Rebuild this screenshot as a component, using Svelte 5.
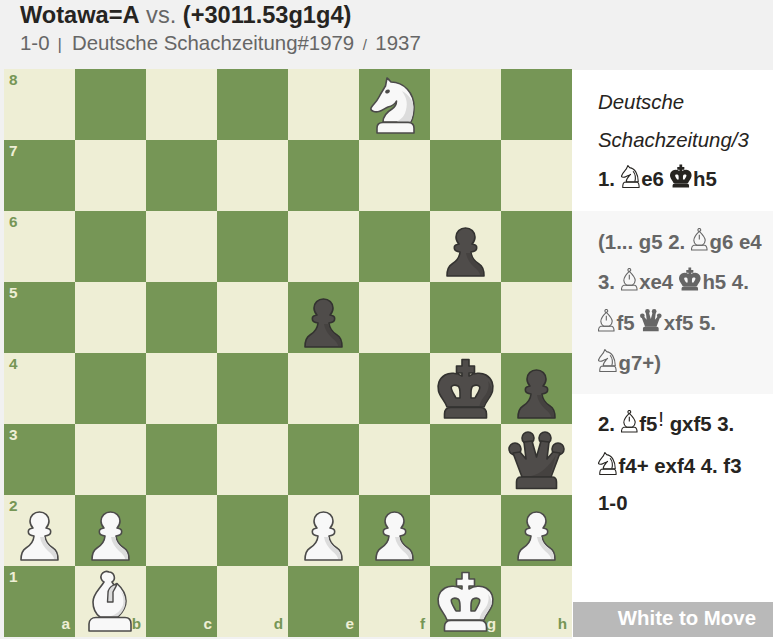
<script>
  const files = ['a', 'b', 'c', 'd', 'e', 'f', 'g', 'h'];
  const pieces = {
    f8: 'wn', g6: 'bp', e5: 'bp', g4: 'bk', h4: 'bp', h3: 'bq',
    a2: 'wp', b2: 'wp', e2: 'wp', f2: 'wp', h2: 'wp', b1: 'wb', g1: 'wk'
  };
  const squares = [];
  for (let r = 8; r >= 1; r--) {
    for (let f = 0; f < 8; f++) {
      const name = files[f] + r;
      squares.push({
        name,
        dark: (f + r) % 2 === 1,
        rank: f === 0 ? r : null,
        file: r === 1 ? files[f] : null,
        piece: pieces[name]
      });
    }
  }
  const kingBody = 'M32 6.500H39V13H44.500V20H39V23C44 20 51 19 56 22C62 25.500 64 32 62.500 38C61 44 56 48 54 54H17C15 48 10 44 8.500 38C7 32 9 25.500 15 22C20 19 27 20 32 23V20H26.500V13H32ZM21.500 33.500C23 32 26 32 28 33C29.500 34 30 36 30 40V45H26C24 41 20 36 21.500 33.500ZM49.500 33.500C48 32 45 32 43 33C41.500 34 41 36 41 40V45H45C47 41 51 36 49.500 33.500Z';
  const kingBase = 'M21 54.500H50C54 54.500 56.500 57 56.500 61V65H14.500V61C14.500 57 17 54.500 21 54.500Z';
  const queenBody = 'M21 53L12 29L19 28L25 35L23 18L31 17L35.500 33L40 17L48 18L46 35L52 28L59 29L50 53Z';
  const queenBase = 'M20 53H51C54 53 55.500 55 55.500 58V64.500H15.500V58C15.500 55 17 53 20 53Z';
  const queenBalls = [[14, 25], [27, 14], [44, 14], [57, 25]];
</script>

{#snippet piece(code)}
  <svg class="piece {code[0] === 'w' ? 'white' : 'black'}" viewBox="0 0 71 71">
    {#if code[1] === 'p'}
      <path class="body" d="M35.5 17C30 17 26 21 26 26C26 29 27.5 31.5 29 33L27 33.5C24.5 34 24 36 24.5 38C25 40 27 40.5 30 41C29.5 47 27 50 22 53C18.5 55 17 60 17 65L54 65C54 60 52.5 55 49 53C44 50 41.5 47 41 41C44 40.5 46 40 46.5 38C47 36 46.5 34 44 33.5L42 33C43.5 31.5 45 29 45 26C45 21 41 17 35.5 17Z" />
      <path class="shade" d="M36 42C37 48 40 52 44 56C48 59 50 62 50 64L53 64C53 60 52 56 48 53.500C44 50 41 47 40.500 42Z" />
    {:else if code[1] === 'k'}
      <path class="body" fill-rule="evenodd" d={kingBody} />
      <path class="shade" d="M58 28C60 34 57 41 53 45C51 48 50 50 49.500 53L53.500 53C55 48 60 44 61.500 38C62 35 60 30 58 28Z" />
      <path class="body" d={kingBase} />
    {:else if code[1] === 'q'}
      {#each queenBalls as b}
        <circle class="body" cx={b[0]} cy={b[1]} r="6" />
      {/each}
      <path class="body" d={queenBody} />
      <path class="shade" d="M55 31L49 52H30C40 50 48 42 55 31Z" />
      <path class="body" d={queenBase} />
    {:else if code[1] === 'b'}
      <path class="body" d="M34 6A5.500 5.500 0 0 1 37 16L39 19C40 19 41 18 42 17.500C47 22 51 29 51 35C51 43 46 48 43 51H25C21 48 18 43 18 36C18 28 24 24 29 16A5.500 5.500 0 0 1 34 6Z" />
      <path class="shade" d="M45 24C48 28 49 34 48 39C46 44 42 48 36 50H43C47 47 50.500 42 50.500 35C50.500 31 48 27 45 24Z" />
      <path class="cut" d="M32.500 36H38V26C39.500 23 41 21 42 18L38.500 19C35 21 33 24 33 27Z" />
      <path class="body" d="M21 51.500H50C54 51.500 56 54 56 58V65H14V58C14 54 17 51.500 21 51.500Z" />
    {:else if code[1] === 'n'}
      <path class="body" d="M28 9C30 10.500 31 12 32 13C45 13 55 24 55 38C55 44 54 49 52 53H24C24 47 28 43 33 40C36 38 37.500 36 37.500 32C35.500 36 33 37 29 38C26 39 24 41.500 20 42.500C16 43.500 11 42 12 39C14 35 17 34 20 28C22 24 24 21 26.500 17Z" />
      <path class="shade" d="M43 22C47 28 49 33 47 41C46 46 43 50 38 52.500H51.500C54 47 54.500 42 54.500 38C54.500 32 50 26 43 22Z" />
      <ellipse class="eye" cx="28.500" cy="22.500" rx="2.500" ry="1.800" transform="rotate(-25 28.500 22.500)" />
      <path class="body" d="M24 53.500H49C53 53.500 55 56 55 59V64H18V59C18 56 20 53.500 24 53.500Z" />
    {/if}
  </svg>
{/snippet}

{#snippet fig(kind)}
  {#if kind === 'N'}
    <svg class="fig line" width="19" height="23" viewBox="1 1 22 22" preserveAspectRatio="none" aria-label="knight">
      <path d="M9 1.500L11 3.500C17 4 21 10 21 17H7C7 14 10 12 12 10C10 11 8 11.500 7 12C5 13 2 13 1.500 12C2 9 5 7 7 5Z" />
      <path d="M15 7C18 10 18 14 17 17" />
      <path d="M5 17.500H20C21.500 18 22 20 22 22.500H3C3 20 3.500 18 5 17.500Z" />
    </svg>
  {:else if kind === 'B'}
    <svg class="fig line" width="17" height="23" viewBox="1 0 18 24" preserveAspectRatio="none" aria-label="bishop">
      <circle cx="9.800" cy="2" r="1.500" />
      <path d="M9.800 3.500C6 7 4 10 4 13C4 15.500 5.500 17 7 18H13C14.500 17 16 15.500 16 13C16 10 13.500 7 9.800 3.500Z" />
      <path d="M9.800 7V12" />
      <path d="M4 18H15.500C17.500 18.500 18 20 18 23H1.500C1.500 20 2 18.500 4 18Z" />
    </svg>
  {:else if kind === 'K'}
    <svg class="fig solid" width="22" height="24" viewBox="8 6 56 60" aria-label="king">
      <path d={kingBody} /><path d={kingBase} />
    </svg>
  {:else}
    <svg class="fig solid" width="22" height="23" viewBox="8 8 56 58" aria-label="queen">
      {#each queenBalls as b}<circle cx={b[0]} cy={b[1]} r="6" />{/each}
      <path d={queenBody} /><path d={queenBase} />
    </svg>
  {/if}
{/snippet}

<div class="page">
  <header class="head">
    <div class="title"><b>Wotawa=A</b> <span class="vs">vs.</span> <b>(+3011.53g1g4)</b></div>
    <div class="meta">1-0<span class="bar">|</span>Deutsche Schachzeitung#1979<span class="slash">/</span>1937</div>
  </header>
  <main class="main">
    <div class="board">
      {#each squares as s (s.name)}
        <div class="square" class:dark={s.dark}>
          {#if s.rank}<span class="rank">{s.rank}</span>{/if}
          {#if s.file}<span class="file">{s.file}</span>{/if}
          {#if s.piece}{@render piece(s.piece)}{/if}
        </div>
      {/each}
    </div>
    <aside class="side">
      <div class="moves">
        <div class="block first">
          <p class="source">Deutsche Schachzeitung/3</p>
          <p>1. <span class="mv">{@render fig('N')}e6</span> <span class="mv">{@render fig('K')}h5</span></p>
        </div>
        <div class="block var">
          <p>(1... g5 2. <span class="mv">{@render fig('B')}g6</span> e4 3. <span class="mv">{@render fig('B')}xe4</span> <span class="mv">{@render fig('K')}h5</span> 4. <span class="mv">{@render fig('B')}f5</span> <span class="mv">{@render fig('Q')}xf5</span> 5. <span class="mv">{@render fig('N')}g7+)</span></p>
        </div>
        <div class="block last">
          <p class="line">2. <span class="mv">{@render fig('B')}f5<span class="nag">!</span></span> gxf5 3. <span class="mv">{@render fig('N')}f4+</span> exf4 4. f3</p>
          <p class="result">1-0</p>
        </div>
      </div>
      <div class="turn">White to Move</div>
    </aside>
  </main>
</div>

<style>
  :global(body) {
    margin: 0;
    background: #f1f1f1;
  }
  .page {
    width: 773px;
    height: 639px;
    overflow: hidden;
    font-family: "Liberation Sans", Arial, sans-serif;
    background: #f1f1f1;
  }
  .head {
    height: 69px;
    box-sizing: border-box;
    padding: 2px 0 0 20px;
  }
  .title {
    font-size: 23.600px;
    line-height: 27px;
    color: #666;
  }
  .title b {
    color: #262421;
  }
  .meta {
    font-size: 20.400px;
    line-height: 24px;
    margin-top: 2px;
    color: #666;
  }
  .bar {
    font-size: 17px;
    margin: 0 10px 0 8px;
  }
  .slash {
    font-size: 15px;
    margin: 0 8.500px;
  }
  .main {
    display: flex;
    padding-left: 4px;
  }
  .board {
    display: grid;
    grid-template-columns: repeat(8, 71px);
    grid-template-rows: repeat(8, 71px);
    width: 568px;
    flex: none;
  }
  .square {
    position: relative;
    background: #eeeed5;
    color: #769656;
  }
  .square.dark {
    background: #769656;
    color: #eeeed5;
  }
  .rank,
  .file {
    position: absolute;
    font-size: 15.300px;
    line-height: 16px;
    font-weight: 700;
  }
  .rank {
    left: 5px;
    top: 3px;
  }
  .file {
    right: 5px;
    bottom: 5px;
  }
  .piece {
    position: absolute;
    inset: 0;
    width: 71px;
    height: 71px;
    display: block;
  }
  .piece .body {
    stroke-width: 1.6;
    stroke-linejoin: round;
  }
  .white .body {
    fill: #f8f8f8;
    stroke: #4c4b4a;
  }
  .white .shade {
    fill: #dcdcdc;
  }
  .white .eye {
    fill: #4c4b4a;
  }
  .black .body {
    fill: #4f4c4a;
    stroke: #333230;
  }
  .black .shade {
    fill: #454240;
  }
  .cut {
    fill: #dcdcdc;
    stroke: #4c4b4a;
    stroke-width: 1.4;
    stroke-linejoin: round;
  }
  .side {
    width: 201px;
    height: 570px;
    flex: none;
    background: #fff;
    display: flex;
    flex-direction: column;
    margin-top: 1px;
  }
  .moves {
    flex: 1;
  }
  .block {
    padding: 0 4px 0 26px;
    font-size: 20.400px;
    font-weight: 700;
    color: #262421;
    line-height: 40.500px;
  }
  .block p {
    margin: 0;
  }
  .first {
    height: 141px;
    box-sizing: border-box;
    padding-top: 13px;
  }
  .source {
    font-style: italic;
    font-weight: 400;
    line-height: 38px;
  }
  .var {
    background: #f7f7f7;
    color: #666;
    height: 183px;
    box-sizing: border-box;
    padding-top: 10.500px;
  }
  .last {
    padding-top: 9px;
  }
  .first p:not(.source) {
    line-height: 41px;
  }
  .block .line {
    line-height: 42px;
  }
  .block .result {
    line-height: 32px;
  }
  .mv {
    white-space: nowrap;
  }
  .fig {
    display: inline-block;
    vertical-align: -2px;
    margin-right: 1.500px;
  }
  .fig.line {
    fill: none;
    stroke: currentColor;
    stroke-width: 1.100;
    stroke-linejoin: round;
  }
  .fig.line * {
    vector-effect: non-scaling-stroke;
  }
  .fig.solid {
    fill: currentColor;
    fill-rule: evenodd;
  }
  .nag {
    position: relative;
    top: -5px;
    font-weight: 400;
    margin-left: 1px;
  }
  .turn {
    height: 35px;
    background: #b9b9b9;
    color: #fff;
    font-size: 20.400px;
    font-weight: 700;
    line-height: 33px;
    text-align: right;
    padding-right: 17px;
    margin-bottom: 3px;
    margin-left: 1px;
  }
</style>
